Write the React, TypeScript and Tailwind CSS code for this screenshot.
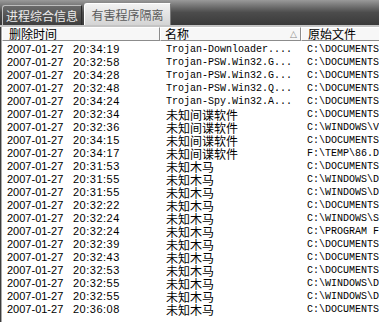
import React from "react";

type Row = { t: string; n: string; f: string };

const rows: Row[] = [
  { t: "20:34:19", n: "Trojan-Downloader....", f: "C:\\DOCUMENTS" },
  { t: "20:32:58", n: "Trojan-PSW.Win32.G...", f: "C:\\DOCUMENTS" },
  { t: "20:34:28", n: "Trojan-PSW.Win32.G...", f: "C:\\DOCUMENTS" },
  { t: "20:32:48", n: "Trojan-PSW.Win32.Q...", f: "C:\\DOCUMENTS" },
  { t: "20:34:24", n: "Trojan-Spy.Win32.A...", f: "C:\\DOCUMENTS" },
  { t: "20:32:34", n: "未知间谍软件", f: "C:\\DOCUMENTS" },
  { t: "20:32:36", n: "未知间谍软件", f: "C:\\WINDOWS\\V" },
  { t: "20:34:15", n: "未知间谍软件", f: "C:\\DOCUMENTS" },
  { t: "20:34:17", n: "未知间谍软件", f: "F:\\TEMP\\86.D" },
  { t: "20:31:53", n: "未知木马", f: "C:\\DOCUMENTS" },
  { t: "20:31:55", n: "未知木马", f: "C:\\WINDOWS\\D" },
  { t: "20:31:55", n: "未知木马", f: "C:\\WINDOWS\\D" },
  { t: "20:32:22", n: "未知木马", f: "C:\\DOCUMENTS" },
  { t: "20:32:24", n: "未知木马", f: "C:\\WINDOWS\\S" },
  { t: "20:32:24", n: "未知木马", f: "C:\\PROGRAM F" },
  { t: "20:32:39", n: "未知木马", f: "C:\\DOCUMENTS" },
  { t: "20:32:43", n: "未知木马", f: "C:\\DOCUMENTS" },
  { t: "20:32:53", n: "未知木马", f: "C:\\DOCUMENTS" },
  { t: "20:32:55", n: "未知木马", f: "C:\\WINDOWS\\D" },
  { t: "20:32:55", n: "未知木马", f: "C:\\WINDOWS\\D" },
  { t: "20:36:08", n: "未知木马", f: "C:\\DOCUMENTS" },
];

const cjk = "font-['Noto_Sans_CJK_SC',sans-serif]";
const mono = "font-['Liberation_Mono','Noto_Sans_CJK_SC',monospace]";

export default function App() {
  return (
    <div className="w-[379px] h-[322px] bg-white overflow-hidden text-black">
      {/* tab bar */}
      <div className="h-[25px] flex items-end gap-[2px] pl-[2px] bg-gradient-to-b from-[#9a9a9a] via-[#4c4c4c] to-[#3a3a3a]">
        <div
          className={`h-[20px] w-[80px] flex items-center justify-center text-[12px] leading-none text-[#ececec] bg-gradient-to-b from-[#6a6a6a] to-[#3e3e3e] border-t border-l border-[#bdbdbd] border-r border-r-[#2a2a2a] rounded-tl-[3px] ${cjk}`}
        >
          进程综合信息
        </div>
        <div
          className={`h-[22px] w-[87px] flex items-center justify-center text-[12px] leading-none text-[#5a5a5a] bg-gradient-to-b from-[#f2f2f2] to-[#d4d4d4] border-t border-l border-white border-r border-r-[#7a7a7a] rounded-tl-[3px] ${cjk}`}
        >
          有害程序隔离
        </div>
      </div>
      <div className="h-[2px] bg-[#c4c4c4]" />
      {/* list */}
      <div className="border-l border-[#3c3c3c] h-[295px]">
        <div className="border-l border-[#a8a8a8] h-full">
          {/* header */}
          <div className={`flex h-[14px] text-[12px] leading-none ${cjk}`}>
            <div className="w-[158px] shrink-0 flex items-center pl-[6px] bg-[#f7f7f7] border-t border-l border-white border-r border-r-[#8c8c8c] border-b border-b-[#8c8c8c]">
              删除时间
            </div>
            <div className="w-[141px] shrink-0 flex items-center pl-[4px] bg-[#f7f7f7] border-t border-l border-white border-r border-r-[#8c8c8c] border-b border-b-[#8c8c8c] relative">
              名称
              <span className="absolute right-[3px] top-[2px] text-[9px] text-[#8a8a8a] font-['DejaVu_Sans',sans-serif]">△</span>
            </div>
            <div className="flex-1 flex items-center pl-[6px] bg-[#f7f7f7] border-t border-l border-white border-b border-b-[#8c8c8c]">
              原始文件
            </div>
          </div>
          <div className="pt-[2px]">
            {rows.map((r, i) => (
              <div key={i} className="flex h-[13px] items-center whitespace-nowrap">
                <div className="w-[158px] shrink-0 flex pl-[5px] text-[11px] leading-[13px] font-['Liberation_Sans',sans-serif]">
                  <span className="w-[66px]">2007-01-27</span>
                  <span className="tracking-[0.5px]">{r.t}</span>
                </div>
                <div
                  className={`w-[141px] shrink-0 pl-[6px] leading-[13px] ${
                    r.n.startsWith("Trojan") ? `text-[10px] ${mono}` : `text-[12px] ${cjk}`
                  }`}
                >
                  {r.n}
                </div>
                <div className={`flex-1 overflow-hidden pl-[6px] text-[10px] leading-[13px] ${mono}`}>{r.f}</div>
              </div>
            ))}
          </div>
        </div>
      </div>
    </div>
  );
}
